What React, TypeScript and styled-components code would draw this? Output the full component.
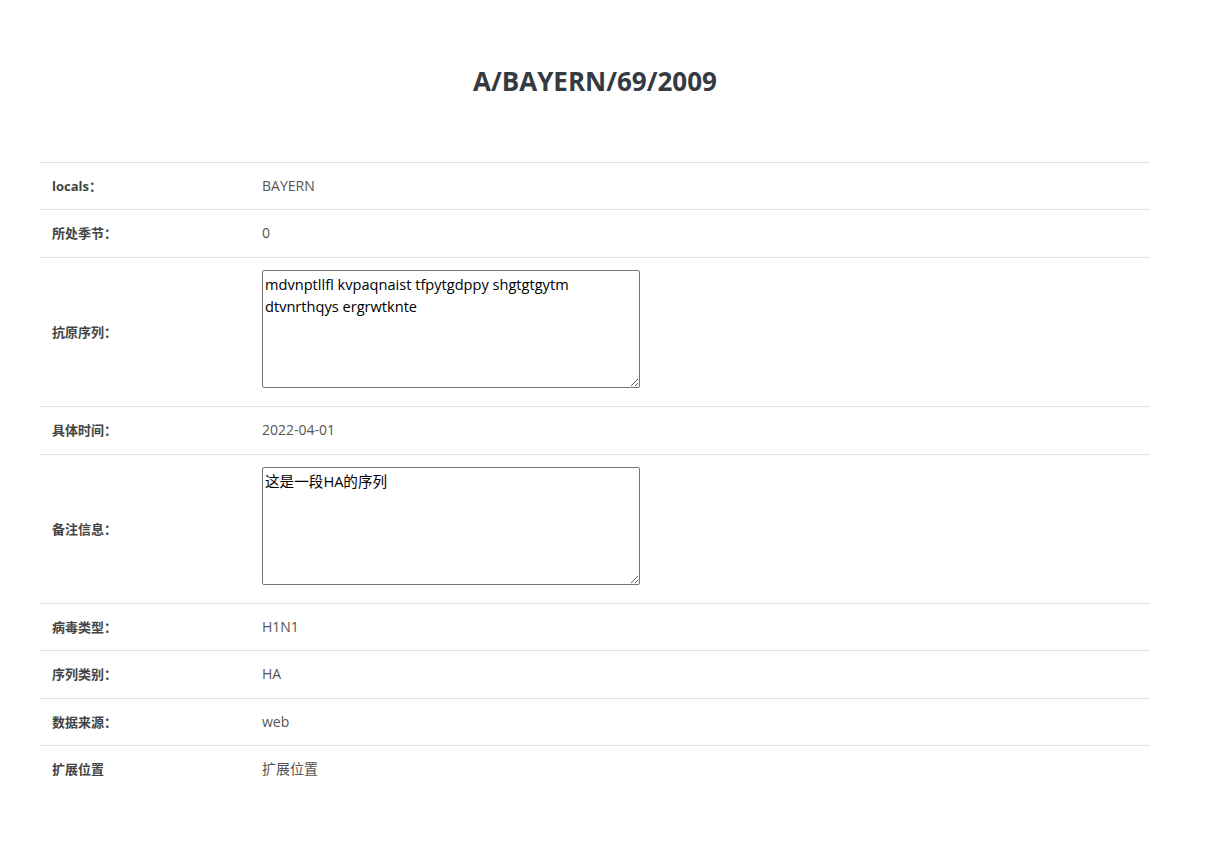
import React from 'react';
import styled, { createGlobalStyle } from 'styled-components';

const GlobalStyle = createGlobalStyle`
  body {
    margin: 0;
    background: #fff;
    font-family: "Open Sans", "Noto Sans CJK SC", sans-serif;
    color: #333;
  }
`;

const Page = styled.div`
  padding: 62px 0 40px 40px;
  width: 1110px;
`;

const Title = styled.h2`
  margin: 0 0 62px;
  text-align: center;
  font-size: 26px;
  font-weight: 700;
  line-height: 38px;
  color: #343a40;
`;

const Table = styled.table`
  width: 100%;
  border-collapse: collapse;
`;

const Row = styled.tr`
  border-top: 1px solid #dee2e6;
`;

const Label = styled.th`
  width: 186px;
  padding: 12px;
  text-align: left;
  vertical-align: middle;
  font-size: 13px;
  font-weight: 700;
  line-height: 22.4px;
  color: #444;
`;

const Value = styled.td`
  padding: 12px;
  vertical-align: middle;
  font-size: 14px;
  line-height: 22.4px;
  color: #555;
`;

const Area = styled.textarea`
  width: 378px;
  height: 118px;
  box-sizing: border-box;
  padding: 2px;
  border: 1px solid #767676;
  border-radius: 2px;
  font-family: "Open Sans", "Noto Sans CJK SC", sans-serif;
  font-size: 14.6px;
  line-height: 22px;
  color: #000;
  vertical-align: baseline;
`;

type Item = { label: string; value: string; area?: boolean };

const items: Item[] = [
  { label: 'locals：', value: 'BAYERN' },
  { label: '所处季节：', value: '0' },
  { label: '抗原序列：', value: 'mdvnptllfl kvpaqnaist tfpytgdppy shgtgtgytm dtvnrthqys ergrwtknte', area: true },
  { label: '具体时间：', value: '2022-04-01' },
  { label: '备注信息：', value: '这是一段HA的序列', area: true },
  { label: '病毒类型：', value: 'H1N1' },
  { label: '序列类别：', value: 'HA' },
  { label: '数据来源：', value: 'web' },
  { label: '扩展位置', value: '扩展位置' },
];

export default function App() {
  return (
    <>
      <GlobalStyle />
      <Page>
        <Title>A/BAYERN/69/2009</Title>
        <Table>
          <tbody>
            {items.map((it) => (
              <Row key={it.label}>
                <Label>{it.label}</Label>
                <Value>
                  {it.area ? <Area defaultValue={it.value} /> : it.value}
                </Value>
              </Row>
            ))}
          </tbody>
        </Table>
      </Page>
    </>
  );
}
